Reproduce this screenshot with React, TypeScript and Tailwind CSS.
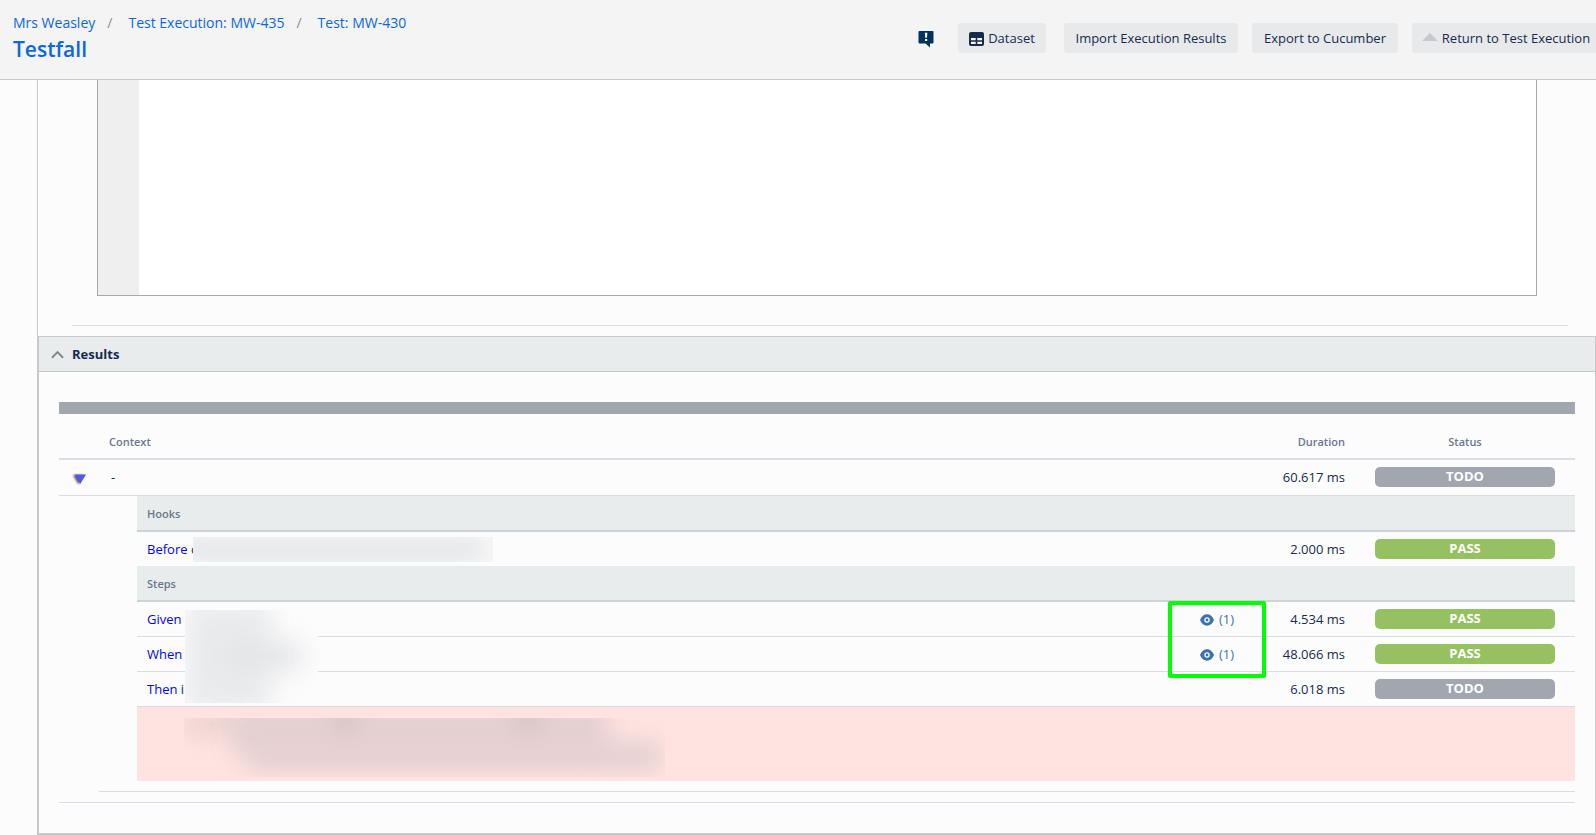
import type { ReactNode } from "react";

const crumbs = ["Mrs Weasley", "Test Execution: MW-435", "Test: MW-430"];

type Status = "TODO" | "PASS";

function StatusBadge({ status }: { status: Status }) {
  const colour = status === "PASS" ? "bg-[#95c160]" : "bg-[#a2a6af]";
  return (
    <span className={`block h-5 rounded-[5px] text-center text-[13px] leading-[19px] font-bold text-white ${colour}`}>
      {status}
    </span>
  );
}

function ActionButton({ children, className = "" }: { children: ReactNode; className?: string }) {
  return (
    <button
      type="button"
      className={`flex h-[30px] shrink-0 items-center justify-center gap-1 rounded-[3px] bg-[#e8e9eb] pt-0.5 text-[13px] whitespace-nowrap text-[#172b4d] ${className}`}
    >
      {children}
    </button>
  );
}

function FeedbackIcon() {
  return (
    <svg width="16" height="18" viewBox="0 0 16 18" aria-hidden="true">
      <path d="M1.500 1h13a1 1 0 0 1 1 1v10.500a1 1 0 0 1-1 1H12V17.500L7.500 13.500h-6a1 1 0 0 1-1-1V2a1 1 0 0 1 1-1z" fill="#03305f" />
      <path d="M6.800 2.800h2.600l-.5 5h-1.600zM7 9h2.200v2H7z" fill="#fff" />
    </svg>
  );
}

function DatasetIcon() {
  return (
    <svg width="15" height="14" viewBox="0 0 15 14" aria-hidden="true">
      <rect width="15" height="14" rx="2" fill="#172b4d" />
      <path d="M2 6h4.700v2.200H2zM8.300 6H13v2.200H8.300zM2 9.800h4.700V12H2zM8.300 9.800H13V12H8.300z" fill="#f4f5f7" />
    </svg>
  );
}

function EyeIcon() {
  return (
    <svg width="14" height="12" viewBox="0 0 14 12" aria-hidden="true">
      <path d="M0 6C1.500 2.200 4 .3 7 .3S12.500 2.200 14 6c-1.500 3.800-4 5.700-7 5.700S1.500 9.800 0 6z" fill="#3b73af" />
      <circle cx="7" cy="6" r="2.100" fill="none" stroke="#fff" strokeWidth="1.300" />
    </svg>
  );
}

function SectionRow({ title }: { title: string }) {
  return (
    <tr>
      <td colSpan={2} />
      <th
        scope="rowgroup"
        colSpan={4}
        className="h-9 border-b-2 border-[#cdd3d9] bg-[#e8ecec] px-2.5 pt-0.5 text-left text-[11px] font-semibold text-[#6b778c]"
      >
        {title}
      </th>
    </tr>
  );
}

interface StepProps {
  keyword: string;
  rest?: string;
  duration: string;
  status: Status;
  evidence?: number;
  divider?: boolean;
  redaction?: ReactNode;
  highlight?: ReactNode;
}

function StepRow({ keyword, rest, duration, status, evidence, divider = true, redaction, highlight }: StepProps) {
  const line = divider ? "h-[35px] border-b border-[#dadce1]" : "h-[34px]";
  return (
    <tr>
      <td colSpan={2} />
      <td className={`relative px-2.5 pt-0.5 ${line}`}>
        <span className="text-[#0000ff]">{keyword}</span>
        {rest && <span> {rest}</span>}
        {redaction}
      </td>
      <td className={`relative pt-0.5 pl-8 ${line}`}>
        {evidence && (
          <a href="#evidence" className="flex items-center gap-[5px] text-[#3b73af]">
            <EyeIcon />({evidence})
          </a>
        )}
        {highlight}
      </td>
      <td className={`pt-0.5 pr-2.5 text-right ${line}`}>{duration}</td>
      <td className={`px-5 ${line}`}>
        <StatusBadge status={status} />
      </td>
    </tr>
  );
}

function Header() {
  return (
    <header className="flex h-20 justify-between border-b border-[#c9c9c9] bg-[#f4f4f4]">
      <div className="shrink-0 pt-[13px] pl-[13px]">
        <nav aria-label="Breadcrumb">
          <ol className="flex text-[14px] leading-5">
            {crumbs.map((crumb, i) => (
              <li key={crumb} className="flex">
                {i > 0 && <span className="pr-4 pl-3 text-[#8c8c8c]">/</span>}
                <a href="#crumb" className="text-[#0c66e4]">
                  {crumb}
                </a>
              </li>
            ))}
          </ol>
        </nav>
        <h1 className="text-[21px] leading-8 font-semibold text-[#0c66e4]">
          <a href="#testfall">Testfall</a>
        </h1>
      </div>
      <div className="flex items-start gap-3.5 pt-[23px]">
        <button type="button" aria-label="Feedback" className="mr-2.5 flex h-[30px] items-center pt-0.5">
          <FeedbackIcon />
        </button>
        <ActionButton className="mr-1 w-[88px]">
          <DatasetIcon />
          Dataset
        </ActionButton>
        <ActionButton className="w-[174px]">Import Execution Results</ActionButton>
        <ActionButton className="w-[146px]">Export to Cucumber</ActionButton>
        <ActionButton className="w-[184px] rounded-r-none pl-1">
          <svg width="16" height="8" viewBox="0 0 16 8" className="mb-1" aria-hidden="true">
            <path d="M8 0l8 8H0z" fill="#c6cad0" />
          </svg>
          Return to Test Execution
        </ActionButton>
      </div>
    </header>
  );
}

function ResultsTable() {
  return (
    <table className="w-full table-fixed border-separate border-spacing-0 text-[13px] text-[#172b4d]">
      <colgroup>
        <col className="w-10" />
        <col className="w-[38px]" />
        <col />
        <col className="w-[98px]" />
        <col className="w-[89px]" />
        <col className="w-[220px]" />
      </colgroup>
      <thead className="text-[11px] text-[#6b778c]">
        <tr>
          <td className="h-[46px] border-b-2 border-[#dadde2]" />
          <th scope="col" colSpan={3} className="border-b-2 border-[#dadde2] px-2.5 pt-3 text-left font-semibold">
            Context
          </th>
          <th scope="col" className="border-b-2 border-[#dadde2] px-2.5 pt-3 text-right font-semibold">
            Duration
          </th>
          <th scope="col" className="border-b-2 border-[#dadde2] pt-3 font-semibold">
            Status
          </th>
        </tr>
      </thead>
      <tbody>
        <tr>
          <td className="h-9 border-b border-[#dadce1] pl-[13px]">
            <button type="button" aria-label="Collapse context" className="block pt-1">
              <svg width="15" height="12" viewBox="0 0 15 12" className="overflow-visible" aria-hidden="true">
                <path d="M1 1h11L6.500 10.500z" fill="#555" className="blur-[1px]" />
                <path d="M2.500 .5H14L8.200 10z" fill="#5558e0" />
              </svg>
            </button>
          </td>
          <td colSpan={3} className="border-b border-[#dadce1] px-3">
            -
          </td>
          <td className="border-b border-[#dadce1] pr-2.5 text-right">60.617 ms</td>
          <td className="border-b border-[#dadce1] px-5 pb-0.5">
            <StatusBadge status="TODO" />
          </td>
        </tr>
        <SectionRow title="Hooks" />
        <StepRow
          keyword="Before"
          rest="c"
          duration="2.000 ms"
          status="PASS"
          divider={false}
          redaction={
            <span className="absolute top-[5px] left-14 h-[25px] w-[300px] overflow-hidden bg-[#f6f6f7]">
              <span className="absolute inset-y-0 -left-2 right-3 bg-[#e8e9ec] blur-[8px]" />
            </span>
          }
        />
        <SectionRow title="Steps" />
        <StepRow
          keyword="Given"
          duration="4.534 ms"
          status="PASS"
          evidence={1}
          redaction={
            <span className="absolute top-2 left-12 z-10 h-[93px] w-[133px] overflow-hidden bg-[#fcfcfc]">
              <span className="absolute -top-2 left-0 h-28 w-[86px] bg-[#eaebed] blur-[12px]" />
              <span className="absolute top-8 left-10 h-7 w-[76px] bg-[#e4e5e8] blur-[12px]" />
            </span>
          }
          highlight={
            <span className="pointer-events-none absolute inset-x-0 -top-px z-10 h-[77px] rounded-[2px] border-4 border-[#00ff00]" />
          }
        />
        <StepRow keyword="When" duration="48.066 ms" status="PASS" evidence={1} />
        <StepRow keyword="Then" rest="i" duration="6.018 ms" status="TODO" />
        <tr>
          <td colSpan={2} />
          <td colSpan={4} className="h-[74px] bg-[#fee3e0] pt-[11px] pl-[47px] align-top">
            <div className="relative h-[59px] w-[481px] overflow-hidden">
              <span className="absolute -top-2 left-0 h-7 w-40 bg-[#efd6d4] blur-[9px]" />
              <span className="absolute -top-3 left-12 h-12 w-[376px] bg-[#e5d0d1] blur-[11px]" />
              <span className="absolute top-6 left-16 h-7 w-[412px] bg-[#e4cfd0] blur-[11px]" />
              <span className="absolute -top-2 left-[150px] h-5 w-6 bg-[#d8c4c6] blur-[9px]" />
              <span className="absolute -top-2 left-[330px] h-5 w-7 bg-[#d8c4c6] blur-[9px]" />
            </div>
          </td>
        </tr>
        <tr>
          <td className="h-[11px]" />
          <td colSpan={5} className="border-b border-[#dadce1]" />
        </tr>
        <tr>
          <td colSpan={6} className="h-[11px] border-b border-[#dadce5]" />
        </tr>
      </tbody>
    </table>
  );
}

export default function App() {
  return (
    <div className="min-h-screen overflow-x-hidden bg-[#fcfcfc] font-['Open_Sans','Noto_Sans',sans-serif] text-[#172b4d]">
      <Header />
      <main className="ml-[37px] border-l border-[#c9c9c9]">
        <section aria-label="Scenario" className="pr-7 pb-2.5 pl-[34px]">
          <div className="mr-[31px] ml-[25px] flex h-[216px] border border-t-0 border-[#a9a9a9] bg-white">
            <div className="w-[41px] bg-[#efefef]" />
            <textarea aria-label="Scenario" readOnly className="flex-1 resize-none outline-none" />
          </div>
          <hr className="mt-[29px] border-[#dfdfe0]" />
        </section>
        <section aria-labelledby="results-title" className="border border-b-2 border-[#c9c9c9]">
          <div className="flex h-[35px] items-center border-b border-[#c9c9c9] bg-[#e8ecec] pl-3">
            <button type="button" aria-label="Toggle results" aria-expanded="true">
              <svg width="13" height="9" viewBox="0 0 14 9" className="block" aria-hidden="true">
                <path d="M1 8l6-6 6 6" fill="none" stroke="#858585" strokeWidth="2" />
              </svg>
            </button>
            <h2 id="results-title" className="pt-0.5 pl-2 text-[13px] font-bold">
              Results
            </h2>
          </div>
          <div className="px-5 pt-[30px] pb-[30px]">
            <div className="h-3 bg-[#a2a6af]" />
            <ResultsTable />
          </div>
        </section>
      </main>
    </div>
  );
}
